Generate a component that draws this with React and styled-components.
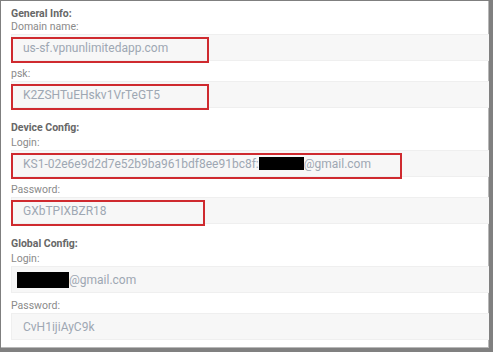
import React from "react";
import styled, { createGlobalStyle } from "styled-components";

const Global = createGlobalStyle`
  html, body { margin: 0; padding: 0; background: #ffffff; }
  body { font-family: Roboto, "Liberation Sans", Arial, sans-serif; }
`;

const Frame = styled.div`
  box-sizing: border-box;
  width: 493px;
  height: 352px;
  overflow: hidden;
  background: #ffffff;
  border-top: 1px solid #7f7f7f;
  border-left: 1px solid #7f7f7f;
  border-right: 4px solid #808080;
  border-bottom: 4px solid #808080;
  box-shadow: inset -1px -1px 0 #b8b8b8;
  padding: 6px 0 0 10px;
  display: flex;
  flex-direction: column;
`;

const Section = styled.section`
  display: flex;
  flex-direction: column;
  margin-top: ${(p) => (p.$first ? 0 : 7)}px;
`;

const Title = styled.div`
  font-size: 10.5px;
  font-weight: 700;
  color: #676767;
  line-height: 13px;
  height: ${(p) => (p.$first ? 13 : 15)}px;
`;

const Label = styled.div`
  font-size: 10.5px;
  color: #8a8a8a;
  line-height: 14px;
  height: 14px;
`;

const Field = styled.div`
  position: relative;
  box-sizing: border-box;
  height: 27px;
  margin-bottom: 6px;
  margin-right: -4px;
  background: #f7f7f7;
  border: 1px solid #efefef;
  display: flex;
  align-items: center;
  padding-left: 11px;
  font-size: 12px;
  color: #9ea7b3;
  white-space: nowrap;
`;

const Highlight = styled.div`
  position: absolute;
  left: -1px;
  top: 2px;
  box-sizing: border-box;
  width: ${(p) => p.$w}px;
  height: 26px;
  border: 2px solid #cf2a2f;
  pointer-events: none;
`;

const Redact = styled.span`
  display: inline-block;
  width: ${(p) => p.$w}px;
  height: ${(p) => p.$h}px;
  margin-left: ${(p) => p.$ml || 0}px;
  background: #000000;
  vertical-align: middle;
`;

const Row = ({ label, children, mark }) => (
  <>
    <Label>{label}</Label>
    <Field>
      {children}
      {mark ? <Highlight $w={mark} /> : null}
    </Field>
  </>
);

export default function App() {
  return (
    <>
      <Global />
      <Frame>
        <Section $first>
          <Title $first>General Info:</Title>
          <Row label="Domain name:" mark={198}>us-sf.vpnunlimitedapp.com</Row>
          <Row label="psk:" mark={198}>K2ZSHTuEHskv1VrTeGT5</Row>
        </Section>
        <Section>
          <Title>Device Config:</Title>
          <Row label="Login:" mark={391}>
            KS1-02e6e9d2d7e52b9ba961bdf8ee91bc8f:
            <Redact $w={45} $h={13} />
            @gmail.com
          </Row>
          <Row label="Password:" mark={194}>GXbTPIXBZR18</Row>
        </Section>
        <Section>
          <Title>Global Config:</Title>
          <Row label="Login:">
            <Redact $w={52} $h={16} $ml={-6} />
            @gmail.com
          </Row>
          <Row label="Password:">CvH1ijiAyC9k</Row>
        </Section>
      </Frame>
    </>
  );
}
